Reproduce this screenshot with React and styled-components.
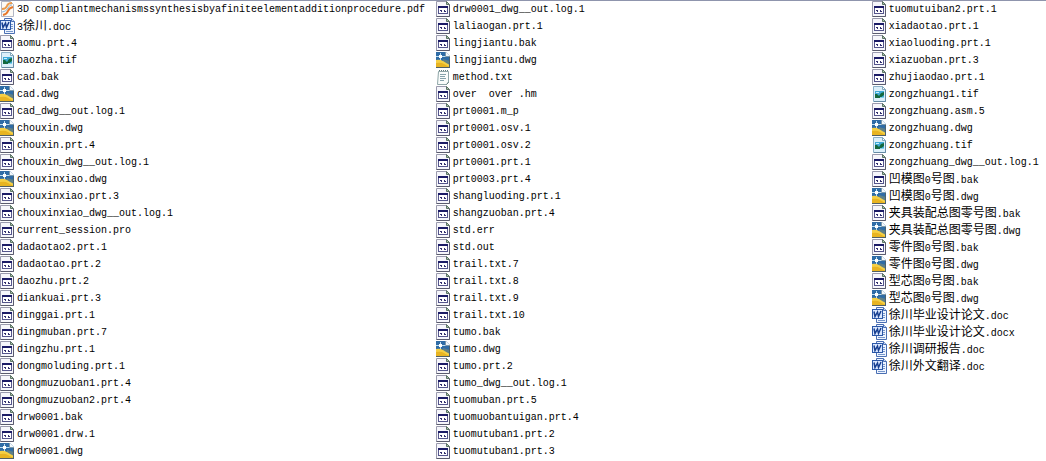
import React from 'react';
import styled, { createGlobalStyle } from 'styled-components';

// Page defaults
const GlobalStyle = createGlobalStyle`
  body {
    margin: 0;
    background: #ffffff;
  }
`;

// Explorer "list" view: fills downwards, then on to the next column
const FileList = styled.ul`
  display: grid;
  grid-template-columns: 5fr 5fr 2fr;
  grid-template-rows: repeat(27, 17px);
  grid-auto-flow: column;
  margin: 0;
  padding: 0;
  border-top: 1px solid #8f95ad;
  list-style: none;
`;

const FileItem = styled.li`
  display: flex;
  align-items: center;
  gap: 2px;
  min-width: 0;
`;

const Icon = styled.svg`
  flex: none;
  width: 15px;
  height: 17px;
`;

const FileName = styled.span`
  font-family: 'Liberation Mono', 'Noto Sans CJK SC', monospace;
  font-size: 10px;
  line-height: 17px;
  color: #000000;
  white-space: pre;
`;

const Hanzi = styled.span`
  font-family: 'Noto Sans CJK SC', sans-serif;
  font-size: 12px;
  line-height: 16px;
`;

// File type icons, all drawn on a 15x17 grid
const icons = {
  app: (
    <>
      <path d="M.5 .5H10.5L13.5 3.5V15.5H.5Z" fill="#f6f6fb" stroke="#9a9aae" />
      <path d="M10.5 .5V3.5H13.5Z" fill="#a9cba6" stroke="#5d7267" />
      <path d="M13.5 4V15.5H.5" fill="none" stroke="#5a5b6e" />
      <rect x="2.5" y="5.5" width="9" height="7" fill="#ffffff" stroke="#55558c" />
      <rect x="2" y="5" width="10" height="2" fill="#1b1b66" />
      <path d="M4 9.5H5M5.5 9V11M8.5 9V11M9 10.5H10" stroke="#33306f" />
    </>
  ),
  dwg: (
    <>
      <path d="M0 0H10L14 4V16H0Z" fill="#2f6ca6" />
      <path d="M7 7L14 9V13L7 10Z" fill="#5f7f86" />
      <path d="M0 8Q4 7 7 9T14 13V15H0Z" fill="#f5cf45" />
      <path d="M0 11Q5 10 8 12T14 15H0Z" fill="#e8b422" />
      <path d="M9 0H10L14 4V5H9Z" fill="#f3f8fb" />
      <path d="M9.5 0V4.5H14" fill="none" stroke="#7c98ab" />
      <path d="M0 4.5H9M4.5 1V8" stroke="#bfe0f2" />
      <rect x="3" y="3" width="3" height="3" fill="#ffffff" />
      <path d="M0 15.5H14" stroke="#515f64" />
      <path d="M13.5 5V15" stroke="#4a6270" />
    </>
  ),
  tif: (
    <>
      <path d="M1.5 .5H10.5L13.5 3.5V15.5H1.5Z" fill="#dceffa" stroke="#8bb0c8" />
      <path d="M10.5 .5V3.5H13.5Z" fill="#ffffff" stroke="#83a7bc" />
      <path d="M13.5 4V15.5H2" fill="none" stroke="#6489a3" />
      <rect x="3" y="5" width="9" height="7" fill="#3fa9d6" />
      <path d="M3 12V8H5L7 10L9 7L12 6V9L8 12Z" fill="#14693f" />
      <path d="M4 6.5H7" stroke="#c9f1ff" />
      <path d="M8 11.5H12" stroke="#7fd0ea" />
    </>
  ),
  word: (
    <>
      <path d="M4.5 .5H11.5L14.5 3.5V15.5H4.5Z" fill="#eef4ff" stroke="#4a6fb3" />
      <path d="M11.5 .5V3.5H14.5" fill="#c9daf5" stroke="#4a6fb3" />
      <path d="M11 6.5H13M11 8.5H13M11 10.5H13M6 13.5H13" stroke="#7797cb" />
      <rect x=".5" y="2.5" width="10" height="9" fill="#dbe8ff" stroke="#2c58a8" />
      <path d="M2 4.5L3 9.5L5.5 5L6.5 9.5L9 4" fill="none" stroke="#173f91" strokeWidth="1.5" />
    </>
  ),
  txt: (
    <>
      <path d="M2.5 2.5H12.5V13.5L10.5 15.5H1.5Z" fill="#f9fcfb" stroke="#8fa6a8" />
      <path d="M3 1.5H13" stroke="#5f7a7c" strokeDasharray="1 1" />
      <path d="M4 5.5H10M4 7.5H9M4 9.5H10M4 11.5H8" stroke="#86a2ab" />
      <path d="M12.5 13L10.5 15.5" stroke="#5f7a7c" />
    </>
  ),
  pdf: (
    <>
      <path d="M1.5 .5H10.5L13.5 3.5V15.5H1.5Z" fill="#fdfaf5" stroke="#b3b7c4" />
      <path d="M2 8Q6 8 7 5T12 2" fill="none" stroke="#ea9a4c" strokeWidth="2" />
      <path d="M3 14Q7 13 8 10T13 6" fill="none" stroke="#e5772a" strokeWidth="2" />
      <path d="M2 11Q6 11 8 7T12 4" fill="none" stroke="#8fbad8" />
    </>
  ),
};

const files = [
  '3D compliantmechanismssynthesisbyafiniteelementadditionprocedure.pdf',
  '3徐川.doc',
  'aomu.prt.4',
  'baozha.tif',
  'cad.bak',
  'cad.dwg',
  'cad_dwg__out.log.1',
  'chouxin.dwg',
  'chouxin.prt.4',
  'chouxin_dwg__out.log.1',
  'chouxinxiao.dwg',
  'chouxinxiao.prt.3',
  'chouxinxiao_dwg__out.log.1',
  'current_session.pro',
  'dadaotao2.prt.1',
  'dadaotao.prt.2',
  'daozhu.prt.2',
  'diankuai.prt.3',
  'dinggai.prt.1',
  'dingmuban.prt.7',
  'dingzhu.prt.1',
  'dongmoluding.prt.1',
  'dongmuzuoban1.prt.4',
  'dongmuzuoban2.prt.4',
  'drw0001.bak',
  'drw0001.drw.1',
  'drw0001.dwg',
  'drw0001_dwg__out.log.1',
  'laliaogan.prt.1',
  'lingjiantu.bak',
  'lingjiantu.dwg',
  'method.txt',
  'over  over .hm',
  'prt0001.m_p',
  'prt0001.osv.1',
  'prt0001.osv.2',
  'prt0001.prt.1',
  'prt0003.prt.4',
  'shangluoding.prt.1',
  'shangzuoban.prt.4',
  'std.err',
  'std.out',
  'trail.txt.7',
  'trail.txt.8',
  'trail.txt.9',
  'trail.txt.10',
  'tumo.bak',
  'tumo.dwg',
  'tumo.prt.2',
  'tumo_dwg__out.log.1',
  'tuomuban.prt.5',
  'tuomuobantuigan.prt.4',
  'tuomutuban1.prt.2',
  'tuomutuban1.prt.3',
  'tuomutuiban2.prt.1',
  'xiadaotao.prt.1',
  'xiaoluoding.prt.1',
  'xiazuoban.prt.3',
  'zhujiaodao.prt.1',
  'zongzhuang1.tif',
  'zongzhuang.asm.5',
  'zongzhuang.dwg',
  'zongzhuang.tif',
  'zongzhuang_dwg__out.log.1',
  '凹模图0号图.bak',
  '凹模图0号图.dwg',
  '夹具装配总图零号图.bak',
  '夹具装配总图零号图.dwg',
  '零件图0号图.bak',
  '零件图0号图.dwg',
  '型芯图0号图.bak',
  '型芯图0号图.dwg',
  '徐川毕业设计论文.doc',
  '徐川毕业设计论文.docx',
  '徐川调研报告.doc',
  '徐川外文翻译.doc',
];

// Extension to icon, anything unknown gets the plain application icon
const iconByExtension = {
  pdf: 'pdf',
  doc: 'word',
  docx: 'word',
  tif: 'tif',
  dwg: 'dwg',
  txt: 'txt',
};

const getIcon = (name) => icons[iconByExtension[name.split('.').pop()] || 'app'];

// Chinese runs are set larger so that one character is two Latin ones wide
const renderName = (name) =>
  name
    .split(/([\u4e00-\u9fff]+)/)
    .map((part, i) => (i % 2 ? <Hanzi key={i}>{part}</Hanzi> : part));

function App() {
  return (
    <>
      <GlobalStyle />
      <FileList>
        {files.map((name) => (
          <FileItem key={name}>
            <Icon viewBox="0 0 15 17" aria-hidden="true">
              {getIcon(name)}
            </Icon>
            <FileName>{renderName(name)}</FileName>
          </FileItem>
        ))}
      </FileList>
    </>
  );
}

export default App;
